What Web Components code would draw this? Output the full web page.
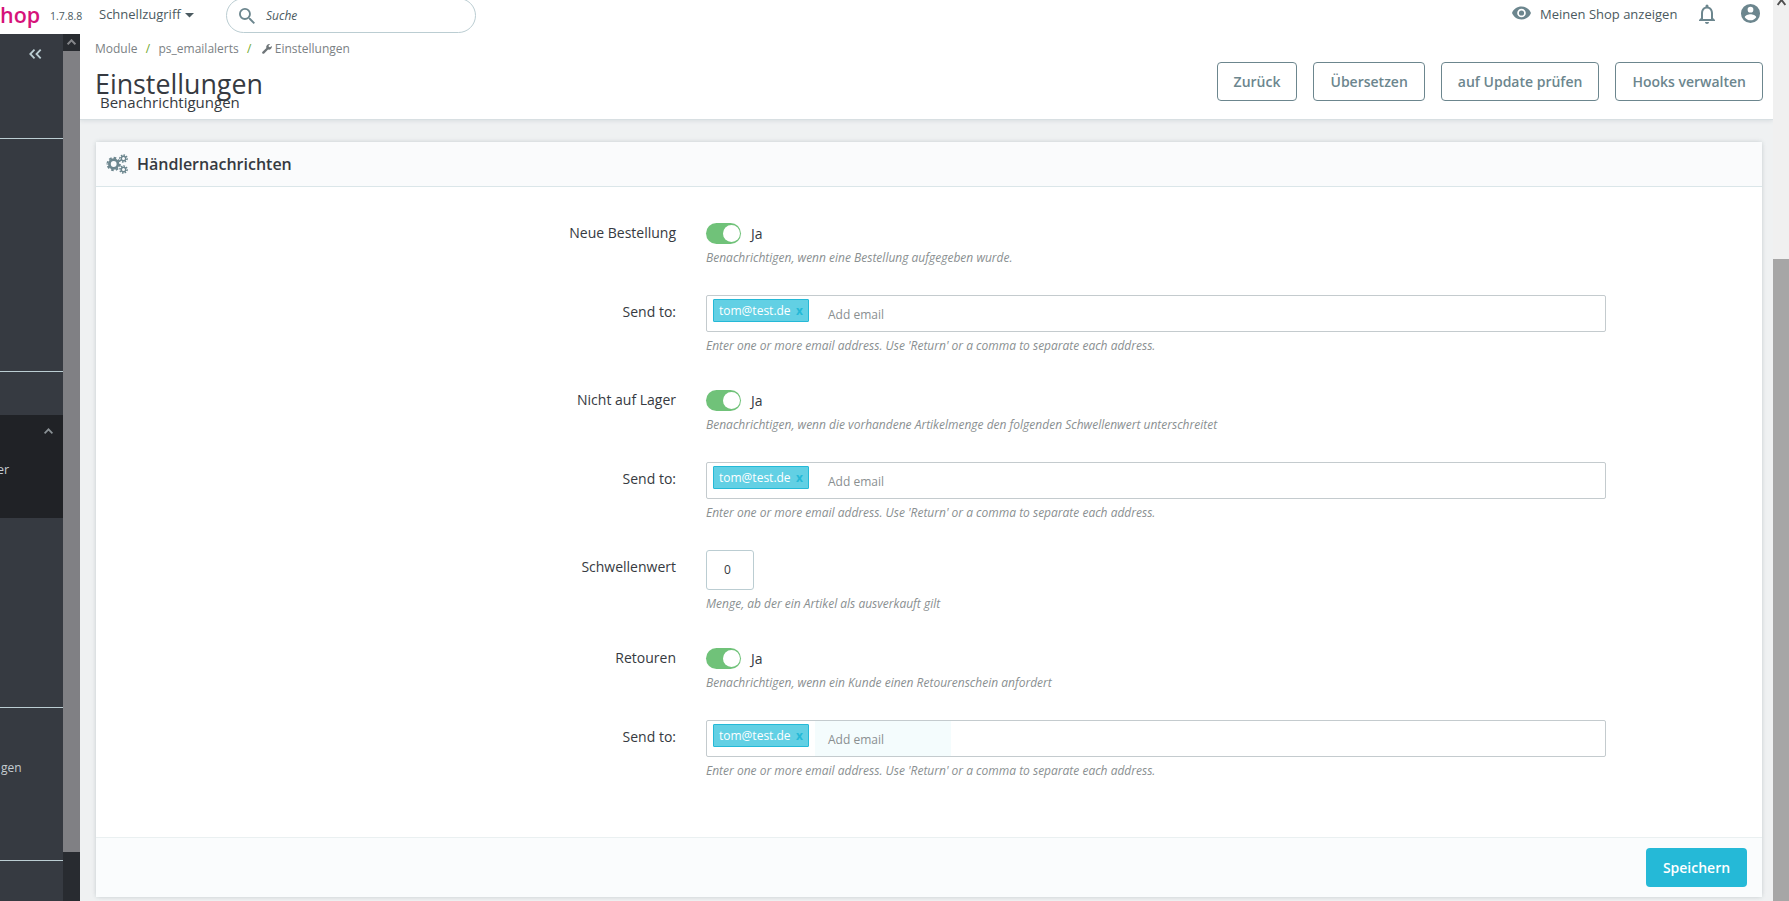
<!DOCTYPE html>
<html lang="de">
<head>
<meta charset="utf-8">
<title>Einstellungen</title>
<style>
    html, body {
        height: 100%;
        margin: 0;
        overflow: hidden;
    }
    body {
        background: #eff1f2;
        color: #363a41;
        font-family: "Open Sans", "Noto Sans", sans-serif;
        font-size: 14px;
    }
</style>
</head>
<body>
<shop-app>
    <shop-topbar slot="top" version="1.7.8.8"></shop-topbar>
    <shop-sidebar slot="side"></shop-sidebar>
    <page-head slot="main" heading="Einstellungen" sub="Benachrichtigungen">
        <ghost-button>Zurück</ghost-button>
        <ghost-button>Übersetzen</ghost-button>
        <ghost-button>auf Update prüfen</ghost-button>
        <ghost-button>Hooks verwalten</ghost-button>
    </page-head>
    <form-panel slot="main" heading="Händlernachrichten" action="Speichern">
        <form-row label="Neue Bestellung" help="Benachrichtigen, wenn eine Bestellung aufgegeben wurde."><toggle-switch>Ja</toggle-switch></form-row>
        <form-row label="Send to:" help="Enter one or more email address. Use 'Return' or a comma to separate each address."><email-tags>tom@test.de</email-tags></form-row>
        <form-row label="Nicht auf Lager" help="Benachrichtigen, wenn die vorhandene Artikelmenge den folgenden Schwellenwert unterschreitet"><toggle-switch>Ja</toggle-switch></form-row>
        <form-row label="Send to:" help="Enter one or more email address. Use 'Return' or a comma to separate each address."><email-tags>tom@test.de</email-tags></form-row>
        <form-row label="Schwellenwert" help="Menge, ab der ein Artikel als ausverkauft gilt"><number-box>0</number-box></form-row>
        <form-row label="Retouren" help="Benachrichtigen, wenn ein Kunde einen Retourenschein anfordert"><toggle-switch>Ja</toggle-switch></form-row>
        <form-row label="Send to:" help="Enter one or more email address. Use 'Return' or a comma to separate each address."><email-tags active>tom@test.de</email-tags></form-row>
    </form-panel>
    <scroll-bar slot="scroll"></scroll-bar>
</shop-app>

<script>
'use strict';

(function() {
    class BaseElement extends HTMLElement {
        constructor() {
            super();
            this.attachShadow({ mode: 'open' });
        }

        connectedCallback() {
            this.shadowRoot.innerHTML = `<style>*{box-sizing:border-box}${this.styles}</style>${this.markup}`;
        }

        attr(name) {
            return this.getAttribute(name) || '';
        }
    }

    class ShopApp extends BaseElement {
        get styles() {
            return `
                :host { display: grid; grid-template: 34px 867px / 80px 1693px 16px; width: 1789px; height: 901px; }
                .top { grid-area: 1 / 1 / 2 / 3; background: #fff; }
                .side { grid-area: 2 / 1 / 3 / 2; }
                .main { grid-area: 2 / 2 / 3 / 3; overflow: hidden; }
                .scroll { grid-area: 1 / 3 / 3 / 4; }
            `;
        }

        get markup() {
            return `
                <div class="top"><slot name="top"></slot></div>
                <div class="side"><slot name="side"></slot></div>
                <div class="main"><slot name="main"></slot></div>
                <div class="scroll"><slot name="scroll"></slot></div>
            `;
        }
    }

    class ShopTopbar extends BaseElement {
        get styles() {
            return `
                :host { display: flex; height: 34px; align-items: flex-start; overflow: hidden; font-size: 13px; line-height: 20px; color: #4b5a60; white-space: nowrap; }
                svg { display: block; flex: none; fill: #6c868e; }
                .logo { width: 50px; color: #d6127a; font-size: 21.5px; font-weight: 600; line-height: 29px; }
                .version { width: 49px; font-size: 10.5px; padding-top: 6px; }
                .quick { display: flex; width: 127px; padding-top: 4px; }
                .quick svg { margin: 9px 0 0 4px; fill: #4b5a60; }
                .search { display: flex; width: 250px; height: 35px; margin-top: -2px; padding: 9px 12px; border: 1px solid #bbcdd2; border-radius: 18px; font-style: italic; font-size: 12px; line-height: 16px; }
                .search svg { margin-right: 11px; }
                .right { display: flex; margin-left: auto; padding-right: 12px; }
                .view { width: 158px; padding-top: 4px; }
                .eye { margin: 4px 9px 0 0; }
                .bell { margin: 4px 25px 0 1px; }
                .user { margin: 3px 0 0; }
            `;
        }

        get markup() {
            return `
                <div class="logo">hop</div>
                <div class="version">${this.attr('version')}</div>
                <div class="quick">Schnellzugriff<svg width="9" height="5" viewBox="0 0 9 5"><path d="M0 0h9L4.500 4.500z"/></svg></div>
                <div class="search"><svg width="16" height="16" viewBox="3 3 17.500 17.500"><path d="M15.500 14h-.79l-.28-.27A6.470 6.470 0 0 0 16 9.500 6.500 6.500 0 1 0 9.500 16c1.610 0 3.090-.59 4.230-1.570l.27.28v.79l5 4.990L20.490 19l-4.990-5zm-6 0C7.010 14 5 11.990 5 9.500S7.010 5 9.500 5 14 7.010 14 9.500 11.990 14 9.500 14z"/></svg>Suche</div>
                <div class="right">
                    <svg class="eye" width="19" height="18" viewBox="1 2 22 20"><path d="M12 4.500C7 4.500 2.730 7.610 1 12c1.730 4.390 6 7.500 11 7.500s9.270-3.110 11-7.500c-1.730-4.390-6-7.500-11-7.500zM12 17a5 5 0 1 1 0-10 5 5 0 0 1 0 10zm0-8a3 3 0 1 0 0 6 3 3 0 0 0 0-6z"/></svg>
                    <div class="view">Meinen Shop anzeigen</div>
                    <svg class="bell" width="16" height="20" viewBox="4 2 16 20"><path d="M12 22c1.100 0 2-.9 2-2h-4c0 1.100.9 2 2 2zm6-6v-5c0-3.070-1.630-5.640-4.500-6.320V4a1.500 1.500 0 0 0-3 0v.68C7.640 5.360 6 7.920 6 11v5l-2 2v1h16v-1l-2-2zm-2 1H8v-6c0-2.480 1.510-4.500 4-4.500s4 2.020 4 4.500v6z"/></svg>
                    <svg class="user" width="21" height="21" viewBox="1 1 22 22"><path d="M12 2a10 10 0 1 0 0 20 10 10 0 0 0 0-20zm0 3a3 3 0 1 1 0 6 3 3 0 0 1 0-6zm0 14.200A7.200 7.200 0 0 1 6 15.980c.03-1.990 4-3.080 6-3.080s5.970 1.090 6 3.080a7.200 7.200 0 0 1-6 3.220z"/></svg>
                </div>
            `;
        }
    }

    class ShopSidebar extends BaseElement {
        get styles() {
            return `
                :host { display: grid; grid-template-columns: 63px 17px; height: 867px; color: #c5ccd0; font-size: 12.5px; line-height: 18px; }
                nav { background: #363a41; overflow: hidden; }
                section { border-bottom: 1px solid #bbcdd2; }
                svg { display: block; fill: none; stroke: #bbcdd2; }
                .a { height: 105px; padding: 15px 0 0 29px; }
                .b { height: 233px; }
                .c { height: 336px; padding-top: 43px; }
                .open { height: 103px; padding-top: 13px; background: #202226; }
                .open svg { margin-left: 44px; stroke: #8b9296; }
                .open span { display: block; margin: 27px 0 0 -3px; }
                .d { height: 153px; padding: 51px 0 0 1px; font-size: 12px; }
                .track { background: #282b30; }
                .up { height: 17px; padding: 5px 0 0 4px; }
                .up svg { stroke: #85868a; }
                .thumb { height: 801px; background: #808084; }
            `;
        }

        get markup() {
            return `
                <nav>
                    <section class="a"><svg width="13" height="10" viewBox="0 0 13 10" stroke-width="1.800"><path d="M5.500.7L1.300 5l4.200 4.300M11.700.7L7.500 5l4.200 4.300"/></svg></section>
                    <section class="b"></section>
                    <section class="c"><div class="open"><svg width="9" height="6" viewBox="0 0 9 6" stroke-width="1.700"><path d="M.6 5.300l3.900-4 3.900 4"/></svg><span>er</span></div></section>
                    <section class="d">gen</section>
                </nav>
                <div class="track">
                    <div class="up"><svg width="9" height="6" viewBox="0 0 9 6" stroke-width="2"><path d="M.6 5.300l3.900-4 3.900 4"/></svg></div>
                    <div class="thumb"></div>
                </div>
            `;
        }
    }

    class PageHead extends BaseElement {
        get styles() {
            return `
                :host { display: flex; justify-content: space-between; height: 85px; padding: 0 10px 0 15px; background: #fff; border-bottom: 1px solid #d8dfe2; box-shadow: 0 1px 4px rgba(90, 110, 120, .15); white-space: nowrap; }
                .crumbs { display: flex; height: 28px; align-items: center; font-size: 12px; color: #7b8184; }
                .crumbs i { width: 21px; text-align: center; color: #70a82e; font-style: normal; }
                .crumbs svg { margin: 2px 3px 0 2px; fill: #6f7679; }
                h1 { margin: 3px 0 0; font-size: 26.8px; font-weight: 400; line-height: 38px; }
                h4 { margin: -11px 0 0 5px; font-size: 15px; font-weight: 400; line-height: 20px; }
                .buttons { display: flex; gap: 16px; padding-top: 28px; }
            `;
        }

        get markup() {
            return `
                <div>
                    <div class="crumbs">Module<i>/</i>ps_emailalerts<i>/</i><svg width="10" height="10" viewBox="0 0 16 16"><path d="M15.600 3.100l-2.800 2.100-2-.8-.3-2L13.100.4A4.700 4.700 0 0 0 7 6.300L.8 12.400a1.800 1.800 0 0 0 2.700 2.700l6.200-6.200a4.700 4.700 0 0 0 5.900-5.800z"/></svg>Einstellungen</div>
                    <h1>${this.attr('heading')}</h1>
                    <h4>${this.attr('sub')}</h4>
                </div>
                <div class="buttons"><slot></slot></div>
            `;
        }
    }

    class GhostButton extends BaseElement {
        get styles() {
            return `
                :host { display: block; box-sizing: border-box; height: 39px; padding: 0 16px; border: 1px solid #6c868e; border-radius: 4px; color: #6c868e; font-size: 14px; font-weight: 600; line-height: 37px; white-space: nowrap; }
            `;
        }

        get markup() {
            return '<slot></slot>';
        }
    }

    class FormPanel extends BaseElement {
        get styles() {
            return `
                :host { display: flex; flex-direction: column; box-sizing: border-box; width: 1666px; height: 755px; margin: 22px 0 0 16px; background: #fff; border-radius: 3px; box-shadow: 0 0 4px rgba(90, 110, 120, .28); }
                header { display: flex; height: 45px; flex: none; align-items: center; padding-left: 10px; background: #fafbfc; border-bottom: 1px solid #dbe6e9; font-size: 16px; font-weight: 600; }
                header svg { margin-right: 9px; }
                .rows { flex: 1; padding-top: 29px; }
                footer { display: flex; height: 60px; flex: none; justify-content: flex-end; padding: 10px 15px 0 0; background: #fafcfd; border-top: 1px solid #eaf0f1; }
                button { width: 101px; height: 39px; padding: 0; border: 0; border-radius: 4px; background: #25b9d7; color: #fff; font: 600 14px "Open Sans", sans-serif; }
            `;
        }

        /* dashed strokes round each ring draw the gear teeth */
        get gears() {
            const gear = (x, y, r, ring) => `
                <circle cx="${x}" cy="${y}" r="${r}" stroke-width="${ring}"/>
                <circle cx="${x}" cy="${y}" r="${r + ring / 2 + .5}" stroke-width="1.900" pathLength="16" stroke-dasharray="1.100 .9"/>
            `;
            return `
                <svg width="22" height="20" viewBox="0 0 22 20" fill="none" stroke="#6c868e">
                    ${gear(7.7, 10, 4.3, 2.8)}
                    ${gear(17.5, 4.5, 2.2, 1.4)}
                    ${gear(17.5, 15.5, 2.2, 1.4)}
                </svg>
            `;
        }

        get markup() {
            return `
                <header>${this.gears}${this.attr('heading')}</header>
                <div class="rows"><slot></slot></div>
                <footer><button>${this.attr('action')}</button></footer>
            `;
        }
    }

    class FormRow extends BaseElement {
        get styles() {
            return `
                :host { display: grid; grid-template-columns: 580px 900px; column-gap: 30px; padding-bottom: 30px; }
                label { height: 34px; line-height: 34px; text-align: right; }
                p { margin: 7px 0 0; font-size: 12px; font-style: italic; line-height: 14px; color: #8a8f91; white-space: nowrap; }
            `;
        }

        get markup() {
            return `
                <label>${this.attr('label')}</label>
                <div><slot></slot><p>${this.attr('help')}</p></div>
            `;
        }
    }

    class ToggleSwitch extends BaseElement {
        get styles() {
            return `
                :host { display: flex; align-items: center; height: 28px; padding-top: 7px; box-sizing: border-box; }
                .knob { display: flex; justify-content: flex-end; width: 35px; height: 21px; margin-right: 10px; padding: 2px 1px; border-radius: 11px; background: #70c279; }
                .knob::after { content: ""; width: 17px; height: 17px; border-radius: 50%; background: #fff; }
            `;
        }

        get markup() {
            return '<div class="knob"></div><slot></slot>';
        }
    }

    class EmailTags extends BaseElement {
        get styles() {
            return `
                :host { display: flex; box-sizing: border-box; height: 37px; padding-left: 6px; border: 1px solid #c4cbce; border-radius: 2px; font-size: 12px; }
                .tag { display: flex; width: 96px; height: 23px; margin: 3px 6px 0 0; padding: 0 5px; justify-content: space-between; border: 1px solid #25b9d7; border-radius: 1px; background: #62d0e4; color: #fff; line-height: 21px; white-space: nowrap; }
                b { color: #25b9d7; font-size: 12px; }
                .add { width: 136px; padding-left: 13px; line-height: 37px; color: #8a8f91; }
                :host([active]) .add { background: #f4fcfd; }
            `;
        }

        get markup() {
            return '<div class="tag"><span><slot></slot></span><b>x</b></div><div class="add">Add email</div>';
        }
    }

    class NumberBox extends BaseElement {
        get styles() {
            return `
                :host { display: block; box-sizing: border-box; width: 48px; height: 40px; padding-left: 17px; border: 1px solid #bbcdd2; border-radius: 3px; font-size: 12px; line-height: 38px; }
            `;
        }

        get markup() {
            return '<slot></slot>';
        }
    }

    class ScrollBar extends BaseElement {
        get styles() {
            return `
                :host { display: block; height: 901px; background: #f0f0f0; }
                .up { height: 259px; padding-left: 4px; }
                svg { display: block; fill: none; stroke: #505050; }
                .thumb { height: 642px; background: #a6a6a6; }
            `;
        }

        get markup() {
            return `
                <div class="up"><svg width="9" height="6" viewBox="0 0 9 6" stroke-width="2"><path d="M.6 5l3.900-5 3.900 5"/></svg></div>
                <div class="thumb"></div>
            `;
        }
    }

    customElements.define('shop-app', ShopApp);
    customElements.define('shop-topbar', ShopTopbar);
    customElements.define('shop-sidebar', ShopSidebar);
    customElements.define('page-head', PageHead);
    customElements.define('ghost-button', GhostButton);
    customElements.define('form-panel', FormPanel);
    customElements.define('form-row', FormRow);
    customElements.define('toggle-switch', ToggleSwitch);
    customElements.define('email-tags', EmailTags);
    customElements.define('number-box', NumberBox);
    customElements.define('scroll-bar', ScrollBar);
})();
</script>
</body>
</html>
